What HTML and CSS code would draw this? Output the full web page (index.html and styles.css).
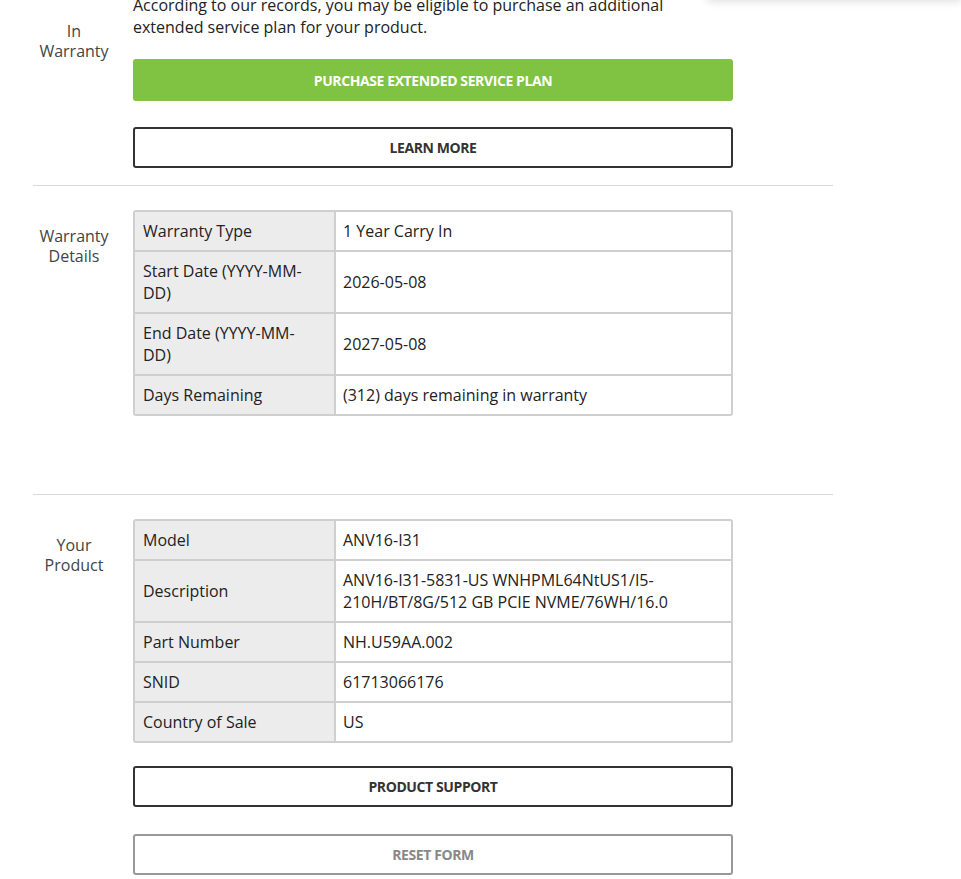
FILE: index.html
```html
<!DOCTYPE html>
<html lang="en">
<head>
    <meta charset="UTF-8">
    <meta name="viewport" content="width=device-width, initial-scale=1.0">
    <title>Warranty Check</title>
    <link rel="stylesheet" href="styles.css">
</head>
<body>
    <div class="header-menu"></div>

    <div class="page">
        <div class="section section-status">
            <div class="section-label">In<br>Warranty</div>
            <div class="section-body">
                <p class="notice">According to our records, you may be eligible to purchase an additional extended service plan for your product.</p>
                <button class="btn btn-green">PURCHASE EXTENDED SERVICE PLAN</button>
                <button class="btn btn-outline btn-learn">LEARN MORE</button>
            </div>
        </div>

        <div class="section section-details">
            <div class="section-label">Warranty<br>Details</div>
            <div class="section-body">
                <table class="info-table">
                    <tr><td class="key">Warranty Type</td><td>1 Year Carry In</td></tr>
                    <tr><td class="key">Start Date (YYYY-MM-DD)</td><td>2026-05-08</td></tr>
                    <tr><td class="key">End Date (YYYY-MM-DD)</td><td>2027-05-08</td></tr>
                    <tr><td class="key">Days Remaining</td><td>(312) days remaining in warranty</td></tr>
                </table>
            </div>
        </div>

        <div class="section section-product">
            <div class="section-label">Your<br>Product</div>
            <div class="section-body">
                <table class="info-table">
                    <tr><td class="key">Model</td><td>ANV16-I31</td></tr>
                    <tr><td class="key">Description</td><td>ANV16-I31-5831-US WNHPML64NtUS1/I5-210H/BT/8G/512 GB PCIE NVME/76WH/16.0</td></tr>
                    <tr><td class="key">Part Number</td><td>NH.U59AA.002</td></tr>
                    <tr><td class="key">SNID</td><td>61713066176</td></tr>
                    <tr><td class="key">Country of Sale</td><td>US</td></tr>
                </table>
                <button class="btn btn-outline btn-support">PRODUCT SUPPORT</button>
                <button class="btn btn-outline btn-reset">RESET FORM</button>
            </div>
        </div>
    </div>
</body>
</html>
```

FILE: styles.css
```css
body {
    margin: 0;
    font-family: "Open Sans", Arial, sans-serif;
    background-color: #fff;
    color: #222;
    overflow: hidden;
}

.header-menu {
    position: absolute;
    top: -40px;
    right: 0;
    width: 254px;
    height: 40px;
    background: #fff;
    box-shadow: 0 2px 8px rgba(0, 0, 0, 0.12);
}

.page {
    width: 800px;
    margin-left: 33px;
    margin-top: -6px;
}

.section {
    display: flex;
    gap: 18px;
}

.section-label {
    width: 82px;
    text-align: center;
    font-size: 16px;
    line-height: 20px;
    color: #444;
}

.section-body {
    width: 600px;
    display: flex;
    flex-direction: column;
}

.section-status {
    padding-bottom: 17px;
    border-bottom: 1px solid #d8d8d8;
}

.section-status .section-label {
    padding-top: 27px;
}

.notice {
    margin: 0;
    font-size: 16px;
    line-height: 22px;
    color: #222;
}

.section-details {
    padding: 24px 0 78px;
    border-bottom: 1px solid #d8d8d8;
}

.section-product {
    padding-top: 24px;
}

.section-details .section-label,
.section-product .section-label {
    padding-top: 16px;
}

.btn {
    display: block;
    width: 600px;
    border-radius: 3px;
    font-family: "Open Sans", Arial, sans-serif;
    font-weight: 700;
    font-size: 14px;
    letter-spacing: -0.4px;
    cursor: pointer;
    background: #fff;
}

.btn-green {
    margin-top: 21px;
    height: 42px;
    border: none;
    background-color: #80c342;
    color: #fff;
}

.btn-outline {
    height: 41px;
    border: 2px solid #333;
    color: #333;
}

.btn-learn {
    margin-top: 26px;
}

.btn-support {
    margin-top: 23px;
}

.btn-reset {
    margin-top: 27px;
    border-color: #999;
    color: #888;
}

.info-table {
    width: 600px;
    border: 2px solid #cfcfcf;
    border-radius: 3px;
    border-spacing: 0;
    font-size: 16px;
    line-height: 22px;
    color: #222;
}

.info-table td {
    padding: 8px 8px 8px 7px;
    border-bottom: 2px solid #cfcfcf;
    vertical-align: middle;
}

.info-table tr:last-child td {
    border-bottom: none;
}

.info-table td.key {
    width: 175px;
    padding: 8px 16px 8px 8px;
    background-color: #ececec;
    border-right: 2px solid #cfcfcf;
}
```
